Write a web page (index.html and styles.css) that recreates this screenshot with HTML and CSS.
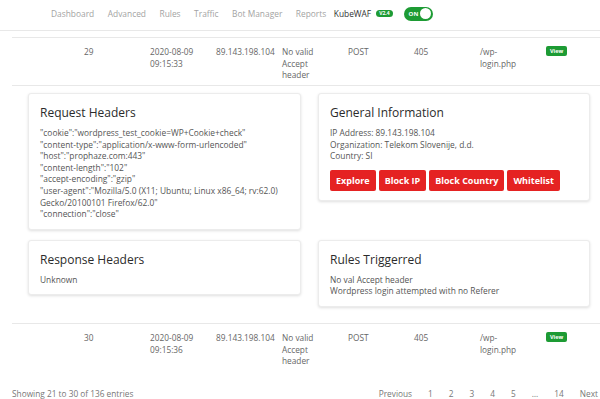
FILE: index.html
```html
<!DOCTYPE html>
<html lang="en">

<head>
    <meta charset="UTF-8">
    <meta name="viewport" content="width=device-width, initial-scale=1.0">
    <title>KubeWAF - Traffic</title>
    <link rel="stylesheet" href="styles.css">
</head>

<body>
    <nav class="topnav">
        <a class="nav-link" href="#">Dashboard</a>
        <a class="nav-link" href="#">Advanced</a>
        <a class="nav-link" href="#">Rules</a>
        <a class="nav-link" href="#">Traffic</a>
        <a class="nav-link" href="#">Bot Manager</a>
        <a class="nav-link" href="#">Reports</a>
        <span class="brand">KubeWAF</span>
        <span class="version">V2.4</span>
        <span class="toggle"><span class="toggle-label">ON</span><span class="knob"></span></span>
    </nav>

    <div class="page">
        <div class="log-row">
            <div class="cell"></div>
            <div class="cell">29</div>
            <div class="cell">2020-08-09 09:15:33</div>
            <div class="cell">89.143.198.104</div>
            <div class="cell">No valid Accept header</div>
            <div class="cell">POST</div>
            <div class="cell">405</div>
            <div class="cell">/wp-login.php</div>
            <div class="cell"><span class="view-btn">View</span></div>
        </div>

        <div class="details">
            <div class="card">
                <h3>Request Headers</h3>
                <p>"cookie":"wordpress_test_cookie=WP+Cookie+check"<br>
                    "content-type":"application/x-www-form-urlencoded"<br>
                    "host":"prophaze.com:443"<br>
                    "content-length":"102"<br>
                    "accept-encoding":"gzip"<br>
                    "user-agent":"Mozilla/5.0 (X11; Ubuntu; Linux x86_64; rv:62.0) Gecko/20100101 Firefox/62.0"<br>
                    "connection":"close"</p>
            </div>
            <div class="card">
                <h3>General Information</h3>
                <p>IP Address: 89.143.198.104<br>
                    Organization: Telekom Slovenije, d.d.<br>
                    Country: SI</p>
                <div class="actions">
                    <button class="btn-red">Explore</button>
                    <button class="btn-red">Block IP</button>
                    <button class="btn-red">Block Country</button>
                    <button class="btn-red">Whitelist</button>
                </div>
            </div>
            <div class="card">
                <h3>Response Headers</h3>
                <p>Unknown</p>
            </div>
            <div class="card">
                <h3>Rules Triggerred</h3>
                <p>No val Accept header<br>
                    Wordpress login attempted with no Referer</p>
            </div>
        </div>

        <div class="log-row">
            <div class="cell"></div>
            <div class="cell">30</div>
            <div class="cell">2020-08-09 09:15:36</div>
            <div class="cell">89.143.198.104</div>
            <div class="cell">No valid Accept header</div>
            <div class="cell">POST</div>
            <div class="cell">405</div>
            <div class="cell">/wp-login.php</div>
            <div class="cell"><span class="view-btn">View</span></div>
        </div>

        <div class="table-foot">
            <span>Showing 21 to 30 of 136 entries</span>
            <div class="pager">
                <a href="#">Previous</a>
                <a href="#">1</a>
                <a href="#">2</a>
                <a href="#">3</a>
                <a href="#">4</a>
                <a href="#">5</a>
                <a href="#">…</a>
                <a href="#">14</a>
                <a href="#">Next</a>
            </div>
        </div>
    </div>
</body>

</html>
```

FILE: styles.css
```css
html,
body {
    overflow: hidden;
}

body {
    margin: 0;
    font-family: 'Open Sans', 'Liberation Sans', sans-serif;
    color: #666;
    background: #fff;
}

.topnav {
    height: 31px;
    box-sizing: border-box;
    padding: 0 0 3px 51px;
    border-bottom: 1px solid #e8e8e8;
    display: flex;
    align-items: center;
    font-size: 8.4px;
}

.nav-link {
    color: #a3a3a3;
    text-decoration: none;
    margin-right: 13.5px;
}

.brand {
    color: #333;
    font-weight: 500;
    margin-left: -6px;
    margin-right: 5px;
}

.version {
    background: #1d9b34;
    color: #fff;
    font-size: 5px;
    font-weight: 700;
    line-height: 7px;
    padding: 0 3px;
    border-radius: 4px;
    margin-right: 11px;
}

.toggle {
    width: 29px;
    height: 14px;
    box-sizing: border-box;
    padding: 0 1.5px 0 5px;
    border-radius: 7px;
    background: #1d9b34;
    display: flex;
    align-items: center;
    justify-content: space-between;
}

.toggle-label {
    color: #fff;
    font-size: 6px;
    font-weight: 700;
}

.knob {
    width: 11px;
    height: 11px;
    border-radius: 50%;
    background: #fff;
}

.page {
    width: 594px;
    margin: 6px 0 0 12px;
}

.log-row {
    display: grid;
    grid-template-columns: repeat(8, 66px) 1fr;
    border-top: 1px solid #e8e8e8;
    font-size: 8.3px;
    line-height: 11.7px;
    color: #666;
}

.cell {
    padding: 8px 9px 4px 6px;
}

.view-btn {
    display: inline-block;
    background: #1d9b34;
    color: #fff;
    font-size: 5.5px;
    font-weight: 700;
    line-height: 10px;
    padding: 0 4px;
    border-radius: 2px;
    vertical-align: top;
}

.details {
    border-top: 1px solid #e8e8e8;
    display: grid;
    grid-template-columns: 273px 272px;
    column-gap: 17px;
    row-gap: 10px;
    align-items: start;
    padding: 7px 10px 16px 16px;
}

.card {
    background: #fff;
    border: 1px solid #ececec;
    border-radius: 3px;
    box-shadow: 0 1px 3px rgba(0, 0, 0, 0.13);
    padding: 11px 11px 9px;
}

.card h3 {
    margin: 0 0 6px;
    font-size: 12px;
    line-height: 16px;
    font-weight: 400;
    color: #2b2b2b;
}

.card p {
    margin: 0;
    font-size: 8.4px;
    line-height: 11.6px;
    color: #555;
}

.actions {
    display: flex;
    gap: 3px;
    margin-top: 8px;
}

.btn-red {
    background: #e52222;
    color: #fff;
    border: none;
    border-radius: 2px;
    font-family: 'Open Sans', 'Liberation Sans', sans-serif;
    font-size: 9px;
    font-weight: 700;
    height: 21px;
    padding: 0 6px;
}

.table-foot {
    display: flex;
    justify-content: space-between;
    align-items: center;
    margin-top: 17px;
    font-size: 8.3px;
    line-height: 12px;
    color: #777;
}

.pager {
    display: flex;
}

.pager a {
    color: #777;
    text-decoration: none;
    padding: 0 8px;
}
```
